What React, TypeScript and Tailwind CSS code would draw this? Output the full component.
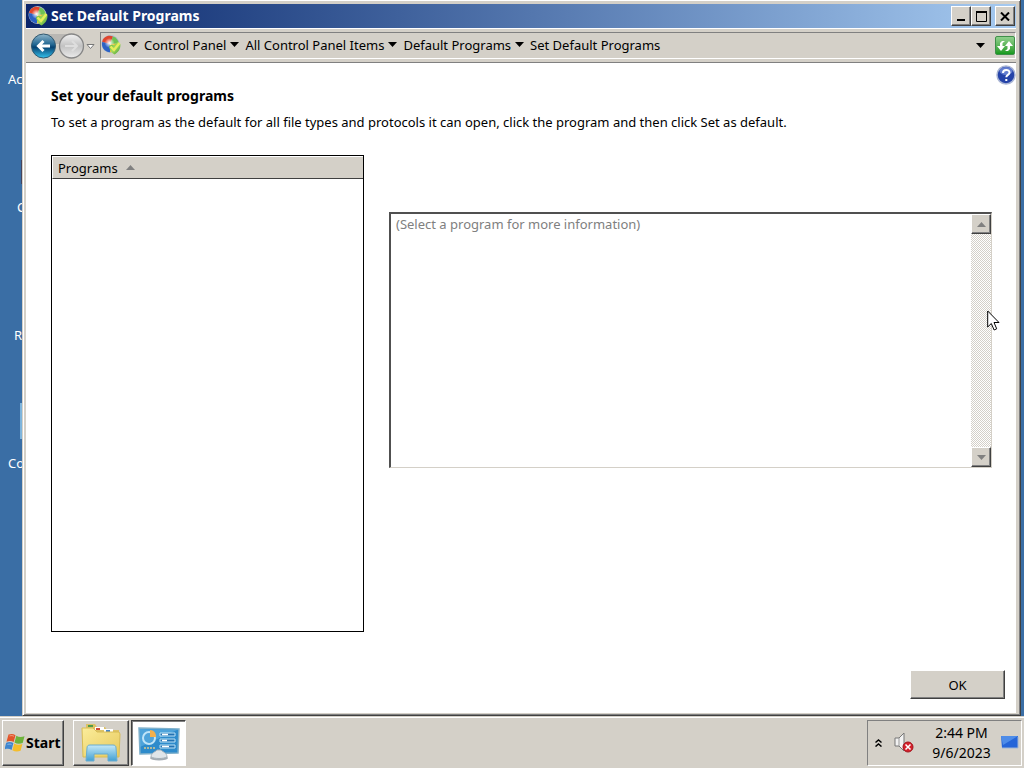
import React from "react";

const crumbs = [
  "Control Panel",
  "All Control Panel Items",
  "Default Programs",
  "Set Default Programs",
];

const raised =
  "border border-t-white border-l-white border-r-[#404040] border-b-[#404040] bg-[#d4d0c8] shadow-[inset_-1px_-1px_0_#808080]";

const CaretDown = ({ className = "" }: { className?: string }) => (
  <svg aria-hidden="true" className={className} height="5" viewBox="0 0 9 5" width="9">
    <path d="M0 0h9L4.500 5z" fill="currentColor" />
  </svg>
);

const ProgramsIcon = ({ id }: { id: string }) => (
  <svg aria-hidden="true" className="shrink-0" height="20" viewBox="0 0 20 20" width="20">
    <defs>
      <linearGradient id={id} x2="1" y2="1">
        <stop offset="0" stopColor="#4cae3a" />
        <stop offset=".5" stopColor="#a5dc5c" />
        <stop offset="1" stopColor="#3d9634" />
      </linearGradient>
      <radialGradient cx=".5" cy=".5" id={`${id}-shine`} r=".5">
        <stop offset="0" stopColor="#fff" />
        <stop offset="1" stopColor="#fff" stopOpacity="0" />
      </radialGradient>
    </defs>
    <circle cx="9.500" cy="9" fill="#aebacb" r="9" />
    <path d="M9 9l3-7.500C7-.5 2 2 1.200 7z" fill="#e0452c" />
    <path d="M9 9l3-7.500c3.500 1 5.500 4 5.700 7z" fill="#6fc253" />
    <path d="M9 9L1.200 7C0 12 3.500 17 9 17.300z" fill="#2c62c4" />
    <path d="M9 9v8.300c4 .2 8-2.800 8.700-8.800z" fill="#f0c437" />
    <circle cx="8.500" cy="8" fill={`url(#${id}-shine)`} r="5" />
    <path d="M8 11l3-1.500 2 1 4-4 2.500 3c0 5-2.500 8-6 10C10 17.500 8.500 15 8 11z" fill={`url(#${id})`} />
    <path d="M9.500 11.500l3.500 3.500 5.500-7" fill="none" stroke="#e6ee5a" strokeWidth="2.400" />
  </svg>
);

const TitleBar = () => (
  <div className="flex h-6 items-center bg-linear-to-r from-[#0a246a] to-[#a6caf0] pr-px pl-0.5 text-white">
    <ProgramsIcon id="title-green" />
    <h1 className="ml-[3px] flex-1 text-[14px] font-bold">Set Default Programs</h1>
    <button aria-label="Minimize" className={`${raised} flex h-5 w-5 items-end justify-center pb-1`}>
      <svg height="2" width="8"><path d="M0 0h8v2H0z" /></svg>
    </button>
    <button aria-label="Maximize" className={`${raised} flex h-5 w-5 items-center justify-center`}>
      <svg fill="none" height="11" stroke="#000" width="11">
        <path d="M.5 1v9.500h10V1M0 1h11" />
        <path d="M0 1h11" strokeWidth="2" />
      </svg>
    </button>
    <button aria-label="Close" className={`${raised} ml-1 flex h-5 w-5 items-center justify-center`}>
      <svg fill="none" height="9" stroke="#000" strokeWidth="2" width="10"><path d="M1 .5l8 8M9 .5l-8 8" /></svg>
    </button>
  </div>
);

const NavBar = () => (
  <nav className="flex h-[35px] items-center border-t border-b border-t-white border-b-[#808080] bg-[#d4d0c8]">
    <div className="flex w-[74px] items-center pl-1">
      <svg aria-hidden="true" height="28" viewBox="0 0 66 28" width="66">
        <defs>
          <linearGradient id="back" x2="0" y2="1">
            <stop offset="0" stopColor="#8fb6ca" />
            <stop offset=".45" stopColor="#1f6490" />
            <stop offset=".55" stopColor="#064272" />
            <stop offset="1" stopColor="#35c3ee" />
          </linearGradient>
          <linearGradient id="forward" x2="0" y2="1">
            <stop offset="0" stopColor="#f2f2f2" />
            <stop offset=".5" stopColor="#c2c2c2" />
            <stop offset="1" stopColor="#ececec" />
          </linearGradient>
        </defs>
        <path d="M14 2h26v10H14z" fill="#b9b7b3" />
        <circle cx="13.500" cy="14" fill="url(#back)" r="12" stroke="#31586f" />
        <path d="M20 14H9M13.500 9L8.500 14l5 5" fill="none" stroke="#fff" strokeWidth="3" />
        <circle cx="41.500" cy="14" fill="url(#forward)" r="12" stroke="#868686" strokeWidth="1.300" />
        <path d="M35 14h12M42 9l5 5-5 5" fill="none" stroke="#dedede" strokeWidth="2" />
        <path d="M57 12.500h7l-3.500 4z" fill="#fff" stroke="#777" />
      </svg>
    </div>
    <div className="flex h-[27px] flex-1 items-center border border-t-[#808080] border-r-white border-b-white border-l-[#808080]">
      <div className="flex items-center gap-1 pb-0.5">
        <ProgramsIcon id="nav-green" />
        {crumbs.map((crumb) => (
          <button className="flex items-center gap-1.5 first-of-type:ml-1" key={crumb}>
            <CaretDown />
            {crumb}
          </button>
        ))}
      </div>
      <button aria-label="Previous locations" className="mr-2.5 ml-auto">
        <CaretDown />
      </button>
      <button aria-label="Refresh" className="flex h-[19px] w-[20px] items-center justify-center rounded-xs border border-[#3f8f49] bg-linear-to-b from-[#8fd08c] to-[#109a1c]">
        <svg height="14" viewBox="0 0 16 14" width="16">
          <path d="M0 7l4 5 4-5H5.500V4L8 2H5L3 4v3zM16 7l-4-5-4 5h2.500v3L8 12h3l2-2V7z" fill="#fff" />
        </svg>
      </button>
    </div>
  </nav>
);

const ProgramList = () => (
  <table className="flex h-[477px] w-[313px] shrink-0 flex-col border border-black bg-white">
    <thead className="block">
      <tr className="block">
        <th className="block h-[23px] border-t border-b border-l border-t-white border-b-[#404040] border-l-white bg-[#d4d0c8] pl-[5px] text-left font-normal">
          <button className="flex h-full items-center gap-2">
            Programs
            <CaretDown className="rotate-180 text-[#808080]" />
          </button>
        </th>
      </tr>
    </thead>
  </table>
);

const ProgramInfo = () => (
  <div className="mt-[57px] flex h-64 flex-1 border-t-2 border-r border-b border-l-2 border-t-[#505050] border-r-[#d4d0c8] border-b-[#d4d0c8] border-l-[#505050]">
    <textarea
      aria-label="Program information"
      className="flex-1 resize-none overflow-hidden px-[5px] leading-5 text-[#808080] outline-none"
      defaultValue="(Select a program for more information)"
      readOnly
    />
    <div className="flex w-5 flex-col justify-between bg-[repeating-conic-gradient(#d4d0c8_0_25%,#fff_0_50%)] bg-[length:2px_2px]">
      <button aria-label="Scroll up" className={`${raised} flex h-5 items-center justify-center text-[#808080]`}>
        <CaretDown className="rotate-180" />
      </button>
      <button aria-label="Scroll down" className={`${raised} flex h-5 items-center justify-center text-[#808080]`}>
        <CaretDown />
      </button>
    </div>
  </div>
);

const DefaultPrograms = () => (
  <main className="relative flex flex-1 flex-col bg-white pt-[23px] pr-[11px] pb-3.5 pl-[25px]">
    <button aria-label="Help" className="absolute top-0.5 right-0">
      <svg height="20" viewBox="0 0 20 20" width="20">
        <circle cx="10" cy="10" fill="#2543a8" r="9" stroke="#a9b5d4" strokeWidth="1.500" />
        <ellipse cx="10" cy="6" fill="#7d96df" opacity=".7" rx="6.500" ry="4" />
        <path d="M7 8c0-4 6.500-4 6.500-.5C13.500 10 10.300 9.800 10.300 12.300M10.300 14v2" fill="none" stroke="#fff" strokeWidth="2" />
      </svg>
    </button>
    <h2 className="text-[14px] leading-5 font-bold">Set your default programs</h2>
    <p className="mt-1.5 leading-5">
      To set a program as the default for all file types and protocols it can open, click the program and then click Set as default.
    </p>
    <div className="mt-[23px] flex gap-[25px] pr-[13px]">
      <ProgramList />
      <ProgramInfo />
    </div>
    <button className={`${raised} mt-auto h-[29px] w-[95px] self-end`}>OK</button>
  </main>
);

const DesktopLabels = () => (
  <div className="flex w-[22px] flex-col overflow-hidden pt-[70px] text-white">
    <span className="h-32 pl-2">Ac</span>
    <span className="h-32 pl-[17px]">C</span>
    <span className="h-32 pl-3.5">R</span>
    <span className="pl-2">Co</span>
    <span className="absolute top-[160px] left-[21px] h-6 w-px bg-[#46445c]" />
    <span className="absolute top-[403px] left-5 h-9 w-0.5 bg-[#7fb5dc]" />
  </div>
);

const Taskbar = () => (
  <footer className="flex h-[52px] items-center border-t border-[#d4d0c8] bg-[#d4d0c8] pr-0.5 pl-0.5 shadow-[inset_0_1px_0_#fff]">
    <button className={`${raised} flex h-[46px] w-[62px] items-center gap-px pl-0.5 text-[14px] font-bold`}>
      <svg aria-hidden="true" className="shrink-0" height="20" viewBox="0 0 20 20" width="20">
        <path d="M3.500 1.500c2.500-1 5-.8 7 .7L8.700 9C6.500 7.700 4 7.700 1.500 8.700z" fill="#e2552a" />
        <path d="M11.300 2.800c2.500 1.500 5.500 1.500 8.200.4L17.700 10c-2.800 1-5.800 1-8.200-.5z" fill="#6db33a" />
        <path d="M1.200 9.700c2.500-1 5-1 7.200.4L6.600 17c-2.200-1.500-4.700-1.500-7.200-.5z" fill="#3f86cf" />
        <path d="M9.200 10.600c2.500 1.500 5.500 1.500 8.200.4l-1.800 6.800c-2.800 1-5.800 1-8.200-.5z" fill="#f4bd2c" />
        <path d="M4.500 3c2-.7 3-.5 4.500.3M2.500 11.500c1.500-.5 3-.5 4 0" fill="none" opacity=".4" stroke="#fff" />
      </svg>
      Start
    </button>
    <button aria-label="File Explorer" className={`${raised} ml-[9px] flex h-[46px] w-14 items-center justify-center`}>
      <svg height="40" viewBox="0 0 42 40" width="42">
        <defs>
          <linearGradient id="folder" x2="1" y2="1">
            <stop offset="0" stopColor="#fbed9b" />
            <stop offset="1" stopColor="#e7c95c" />
          </linearGradient>
          <linearGradient id="stand" x2="0" y2="1">
            <stop offset="0" stopColor="#c5e9f8" />
            <stop offset="1" stopColor="#409fd2" />
          </linearGradient>
        </defs>
        <path d="M6 1h9l2 3h8l2 3h12v6H6z" fill="#dcc266" />
        <path d="M8 2h5v2H8z" fill="#4f9b4a" />
        <path d="M15 4h9v3h-9z" fill="#fff" />
        <path d="M16 5h4v2h-4z" fill="#d44b34" />
        <path d="M24 6h9v3h-9z" fill="#fff" />
        <path d="M26 7h4v2h-4z" fill="#4a86c4" />
        <path d="M2 5h11l4 4h22l1 2-1 23H3z" fill="url(#folder)" stroke="#d8bd55" />
        <path d="M6 38l1-13c0-2 1-3 3-3h23c2 0 3 1 3 3l1 13h-9v-7H14v7z" fill="url(#stand)" stroke="#68acd0" />
      </svg>
    </button>
    <button aria-label="Control Panel" className="ml-0.5 flex h-[46px] w-[55px] items-center justify-center border border-t-[#404040] border-r-white border-b-white border-l-[#404040] bg-white shadow-[inset_1px_1px_0_#808080]">
      <svg height="36" viewBox="0 0 42 36" width="42">
        <path d="M1 3l40 1-1 24-38 1z" fill="#2e8bcb" stroke="#7fb0cb" strokeWidth="1.500" />
        <path d="M2 4l37 1L2 22z" fill="#6dbce9" opacity=".5" />
        <circle cx="11" cy="13" fill="none" r="6" stroke="#bfe4f8" strokeWidth="2" />
        <path d="M12 12V5c4 0 6 3 6 7z" fill="#f3b04c" />
        <path d="M6 23h2m1 0h2m1 0h2m1 0h2" stroke="#d9c98c" strokeWidth="1.500" />
        <path d="M22 8h15v3H22zm0 6h15v3H22zm0 6h15v3H22z" fill="#2272b3" stroke="#b9e1f6" />
        <path d="M24 9.500h6M24 15.500h5M24 21.500h7" stroke="#fff" strokeWidth="1.500" />
        <ellipse cx="21" cy="33" fill="#a4acb3" rx="9" ry="2.500" />
        <path d="M13 32c0-4 4-5 6-7h4c2 2 6 3 6 7-4 2-12 2-16 0z" fill="#dfe5e9" stroke="#a4b0b8" />
      </svg>
    </button>
    <div className="ml-auto flex h-[46px] w-[155px] items-center border border-t-[#808080] border-r-white border-b-white border-l-[#808080] pr-0.5 pl-[7px]">
      <button aria-label="Show hidden icons">
        <svg fill="none" height="8" stroke="#000" strokeWidth="1.500" width="7">
          <path d="M.5 3.500l3-2.500 3 2.500M.5 7.500l3-2.500 3 2.500" />
        </svg>
      </button>
      <button aria-label="Volume muted" className="ml-3">
        <svg height="22" viewBox="0 0 20 22" width="20">
          <path d="M1 6h4l5-5v18l-5-5H1z" fill="#f2f2f2" stroke="#777" />
          <path d="M5 6v8" stroke="#999" />
          <circle cx="14" cy="15" fill="#d5202b" r="5" stroke="#a3141d" />
          <path d="M11.500 12.500l5 5M16.500 12.500l-5 5" stroke="#fff" strokeWidth="1.500" />
        </svg>
      </button>
      <time className="flex-1 pl-2 text-center text-[14px] leading-5">
        2:44 PM
        <br />
        9/6/2023
      </time>
      <button aria-label="Show desktop">
        <svg height="15" viewBox="0 0 18 15" width="18">
          <path d="M0 1h17v12H1z" fill="#2565d8" />
          <path d="M0 1h17L2 10z" fill="#6aa7f3" opacity=".6" />
          <path d="M1 13h16V2" fill="none" stroke="#9eb5d6" />
        </svg>
      </button>
    </div>
  </footer>
);

export default function App() {
  return (
    <div className="flex min-h-screen flex-col bg-[#3a6ea5] font-['Noto_Sans',sans-serif] text-[13px] leading-[18px] text-black">
      <div className="relative flex flex-1 pr-[3px]">
        <DesktopLabels />
        <section className="flex flex-1 flex-col border-r border-b border-l border-r-[#404040] border-b-[#404040] border-l-[#d4d0c8] bg-[#d4d0c8] pt-1 pr-1 pb-0.5 pl-[3px] shadow-[inset_1px_1px_0_#fff,inset_-1px_-1px_0_#808080]">
          <TitleBar />
          <NavBar />
          <DefaultPrograms />
        </section>
      </div>
      <Taskbar />
      <svg aria-hidden="true" className="absolute top-[310px] left-[987px]" height="21" viewBox="0 0 13 21" width="13">
        <path d="M.7 1v16l3.600-3.500 2.800 6.500 2.600-1.200L7 12.500h5z" fill="#fff" stroke="#000" />
      </svg>
    </div>
  );
}
